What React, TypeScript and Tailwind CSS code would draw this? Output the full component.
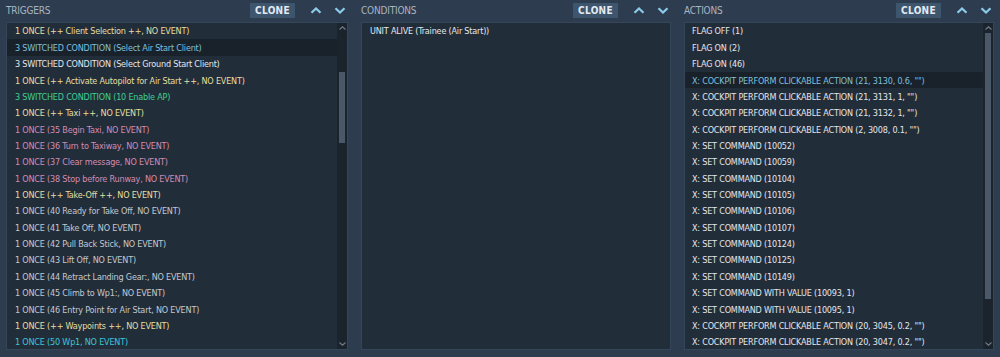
import { ReactNode } from 'react'

type Row = { text: string; color: string; selected?: boolean }

const YELLOW = 'text-[#e6dfa0]'
const WHITE = 'text-[#e4e7ea]'
const GREEN = 'text-[#3fd08f]'
const PINK = 'text-[#d28cb2]'
const GREY = 'text-[#c3c9cf]'
const CYAN = 'text-[#3ec6d6]'
const BLUE = 'text-[#7fc0dc]'

const TRIGGERS: Row[] = [
  { text: '1 ONCE (++ Client Selection ++, NO EVENT)', color: YELLOW },
  { text: '3 SWITCHED CONDITION (Select Air Start Client)', color: BLUE, selected: true },
  { text: '3 SWITCHED CONDITION (Select Ground Start Client)', color: WHITE },
  { text: '1 ONCE (++ Activate Autopilot for Air Start ++, NO EVENT)', color: YELLOW },
  { text: '3 SWITCHED CONDITION (10 Enable AP)', color: GREEN },
  { text: '1 ONCE (++ Taxi ++, NO EVENT)', color: YELLOW },
  { text: '1 ONCE (35 Begin Taxi, NO EVENT)', color: PINK },
  { text: '1 ONCE (36 Turn to Taxiway, NO EVENT)', color: PINK },
  { text: '1 ONCE (37 Clear message, NO EVENT)', color: PINK },
  { text: '1 ONCE (38 Stop before Runway, NO EVENT)', color: PINK },
  { text: '1 ONCE (++ Take-Off ++, NO EVENT)', color: YELLOW },
  { text: '1 ONCE (40 Ready for Take Off, NO EVENT)', color: GREY },
  { text: '1 ONCE (41 Take Off, NO EVENT)', color: GREY },
  { text: '1 ONCE (42 Pull Back Stick, NO EVENT)', color: GREY },
  { text: '1 ONCE (43 Lift Off, NO EVENT)', color: GREY },
  { text: '1 ONCE (44 Retract Landing Gear:, NO EVENT)', color: GREY },
  { text: '1 ONCE (45 Climb to Wp1:, NO EVENT)', color: GREY },
  { text: '1 ONCE (46 Entry Point for Air Start, NO EVENT)', color: GREY },
  { text: '1 ONCE (++ Waypoints ++, NO EVENT)', color: YELLOW },
  { text: '1 ONCE (50 Wp1, NO EVENT)', color: CYAN },
]

const CONDITIONS: Row[] = [{ text: 'UNIT ALIVE (Trainee (Air Start))', color: WHITE }]

const ACTIONS: Row[] = [
  { text: 'FLAG OFF (1)', color: WHITE },
  { text: 'FLAG ON (2)', color: WHITE },
  { text: 'FLAG ON (46)', color: WHITE },
  { text: 'X: COCKPIT PERFORM CLICKABLE ACTION (21, 3130, 0.6, "")', color: BLUE, selected: true },
  { text: 'X: COCKPIT PERFORM CLICKABLE ACTION (21, 3131, 1, "")', color: WHITE },
  { text: 'X: COCKPIT PERFORM CLICKABLE ACTION (21, 3132, 1, "")', color: WHITE },
  { text: 'X: COCKPIT PERFORM CLICKABLE ACTION (2, 3008, 0.1, "")', color: WHITE },
  { text: 'X: SET COMMAND (10052)', color: WHITE },
  { text: 'X: SET COMMAND (10059)', color: WHITE },
  { text: 'X: SET COMMAND (10104)', color: WHITE },
  { text: 'X: SET COMMAND (10105)', color: WHITE },
  { text: 'X: SET COMMAND (10106)', color: WHITE },
  { text: 'X: SET COMMAND (10107)', color: WHITE },
  { text: 'X: SET COMMAND (10124)', color: WHITE },
  { text: 'X: SET COMMAND (10125)', color: WHITE },
  { text: 'X: SET COMMAND (10149)', color: WHITE },
  { text: 'X: SET COMMAND WITH VALUE (10093, 1)', color: WHITE },
  { text: 'X: SET COMMAND WITH VALUE (10095, 1)', color: WHITE },
  { text: 'X: COCKPIT PERFORM CLICKABLE ACTION (20, 3045, 0.2, "")', color: WHITE },
  { text: 'X: COCKPIT PERFORM CLICKABLE ACTION (20, 3047, 0.2, "")', color: WHITE },
]

function Chevron({ up, className = '' }: { up?: boolean; className?: string }) {
  return (
    <svg width="12" height="7" viewBox="0 0 12 7" className={className}>
      <path
        d={up ? 'M1.5 5.8 L6 1.5 L10.5 5.8' : 'M1.5 1.2 L6 5.5 L10.5 1.2'}
        fill="none"
        stroke="currentColor"
        strokeWidth="2.2"
      />
    </svg>
  )
}

function Scrollbar({ thumbTop, thumbHeight }: { thumbTop: number; thumbHeight: number }) {
  return (
    <div className="flex w-[10px] shrink-0 flex-col bg-[#1b232d]">
      <div className="flex h-[10px] items-center justify-center text-[#6d7986]">
        <svg width="7" height="4" viewBox="0 0 7 4">
          <path d="M0.5 3.5 L3.5 0.8 L6.5 3.5" fill="none" stroke="currentColor" strokeWidth="1.2" />
        </svg>
      </div>
      <div className="flex-1 px-[2px]">
        <div className="bg-[#4a5868]" style={{ marginTop: thumbTop, height: thumbHeight }} />
      </div>
      <div className="flex h-[10px] items-center justify-center text-[#6d7986]">
        <svg width="7" height="4" viewBox="0 0 7 4">
          <path d="M0.5 0.5 L3.5 3.2 L6.5 0.5" fill="none" stroke="currentColor" strokeWidth="1.2" />
        </svg>
      </div>
    </div>
  )
}

function Panel({
  title,
  rows,
  width,
  textPad,
  scrollbar,
}: {
  title: string
  rows: Row[]
  width: string
  textPad: string
  scrollbar?: ReactNode
}) {
  return (
    <div className={`flex ${width} shrink-0 flex-col`}>
      <div className="flex h-[22px] items-center pb-[2px]">
        <span className="text-[10px] text-[#a9b5c1]">{title}</span>
        <div className="ml-auto flex items-center">
          <div className="flex h-[15px] w-[45px] items-center justify-center bg-[#3e556e] text-[10px] font-bold tracking-[0.3px] text-[#e3eaf1]">
            CLONE
          </div>
          <Chevron up className="ml-[15px] text-[#8ccbea]" />
          <Chevron className="ml-[12px] mr-[2px] text-[#8ccbea]" />
        </div>
      </div>
      <div className="flex h-[328px] border border-[#35465a] bg-[#222d3a]">
        <div className="flex-1 overflow-hidden">
          {rows.map((r) => (
            <div
              key={r.text}
              className={`flex h-[16.37px] items-center whitespace-nowrap pt-[2px] ${textPad} ${r.color} ${
                r.selected ? 'bg-[#19212b]' : ''
              }`}
            >
              {r.text}
            </div>
          ))}
        </div>
        {scrollbar}
      </div>
    </div>
  )
}

export default function App() {
  return (
    <div
      className="flex h-[357px] w-[1000px] gap-[13px] overflow-hidden bg-[#2d3c4e] px-[6px] font-stretch-condensed text-[9px] tracking-[-0.2px]"
      style={{ fontFamily: '"DejaVu Sans", Verdana, sans-serif' }}
    >
      <Panel
        title="TRIGGERS"
        rows={TRIGGERS}
        width="w-[342px]"
        textPad="pl-[8px]"
        scrollbar={<Scrollbar thumbTop={39} thumbHeight={71} />}
      />
      <Panel title="CONDITIONS" rows={CONDITIONS} width="w-[310px]" textPad="pl-[8px]" />
      <Panel
        title="ACTIONS"
        rows={ACTIONS}
        width="w-[310px]"
        textPad="pl-[7px]"
        scrollbar={<Scrollbar thumbTop={0} thumbHeight={266} />}
      />
    </div>
  )
}
